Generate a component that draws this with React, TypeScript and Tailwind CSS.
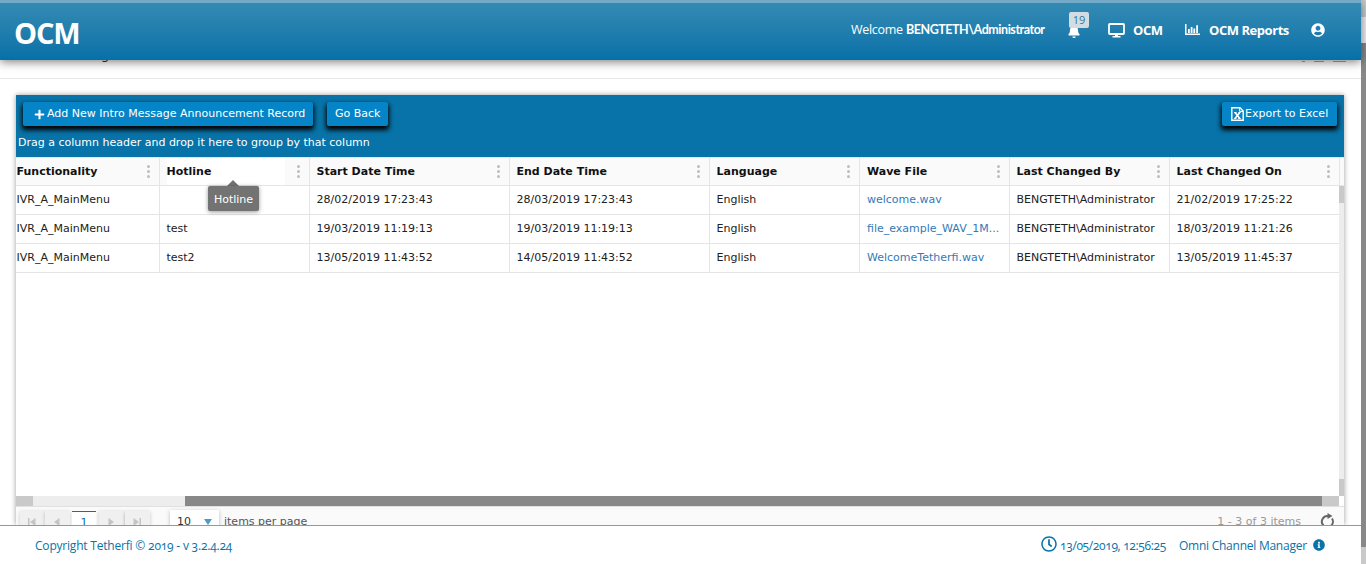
import { FaBell, FaUserCircle, FaInfoCircle, FaPlus, FaRegClock } from "react-icons/fa";

const columns = [
  { title: "Functionality", width: "w-[144px]", pad: "pl-[0.5px]" },
  { title: "Hotline", width: "w-[150px]", pad: "pl-[6.5px]" },
  { title: "Start Date Time", width: "w-[200px]", pad: "pl-[6.5px]" },
  { title: "End Date Time", width: "w-[200px]", pad: "pl-[6.5px]" },
  { title: "Language", width: "w-[150px]", pad: "pl-[6.5px]" },
  { title: "Wave File", width: "w-[150px]", pad: "pl-[7px]" },
  { title: "Last Changed By", width: "w-[160px]", pad: "pl-[6.5px]" },
  { title: "Last Changed On", width: "w-[170px]", pad: "pl-[6.5px]" },
];

const rows = [
  ["IVR_A_MainMenu", "", "28/02/2019 17:23:43", "28/03/2019 17:23:43", "English", "welcome.wav", "BENGTETH\\Administrator", "21/02/2019 17:25:22"],
  ["IVR_A_MainMenu", "test", "19/03/2019 11:19:13", "19/03/2019 11:19:13", "English", "file_example_WAV_1M...", "BENGTETH\\Administrator", "18/03/2019 11:21:26"],
  ["IVR_A_MainMenu", "test2", "13/05/2019 11:43:52", "14/05/2019 11:43:52", "English", "WelcomeTetherfi.wav", "BENGTETH\\Administrator", "13/05/2019 11:45:37"],
];

function Dots() {
  return (
    <span className="flex w-[21px] flex-col items-center gap-[2px] pb-px">
      <i className="h-[3px] w-[3px] rounded-full bg-[#bdbdbd]" />
      <i className="h-[3px] w-[3px] rounded-full bg-[#bdbdbd]" />
      <i className="h-[3px] w-[3px] rounded-full bg-[#bdbdbd]" />
    </span>
  );
}

function MonitorIcon() {
  return (
    <svg width="17" height="15" viewBox="0 0 17 15" fill="none">
      <rect x="1" y="1" width="15" height="10" rx="0.8" stroke="#fff" strokeWidth="1.8" />
      <path d="M7 11h3v2h2.5v1.5h-8V13H7z" fill="#fff" />
    </svg>
  );
}

function BarsIcon() {
  return (
    <svg width="15" height="12" viewBox="0 0 15 12" fill="#fff">
      <path d="M0 0h1.5v9.5H15V11H0zM3 5h1.8v4H3zM5.7 3h1.8v6H5.7zM8.4 4.5h1.8v4.5H8.4zM11.2 1.2h1.8V9h-1.8z" />
    </svg>
  );
}

function ExcelIcon() {
  return (
    <svg width="13" height="14" viewBox="0 0 13 14" fill="none" stroke="#fff">
      <path d="M0.8 0.8h8.2l3.2 3.2v9.2H0.8z" strokeWidth="1.4" />
      <path d="M8.6 1v3.4H12" strokeWidth="1" />
      <path d="M4 5.5l4.8 6M8.8 5.5L4 11.5" strokeWidth="1.6" />
      <path d="M3 5.5h2.6M7.4 5.5h2.4M3 11.5h2.4M7.2 11.5h2.6" strokeWidth="0.9" />
    </svg>
  );
}

function RefreshIcon() {
  return (
    <svg width="15" height="16" viewBox="0 0 15 16" fill="none">
      <path d="M9 3.2A5.6 5.6 0 0 0 3.5 12.5M12 5.5A5.6 5.6 0 0 1 11 12.8" stroke="#666" strokeWidth="2" />
      <path d="M7.5 0v6l5-3z" fill="#666" />
    </svg>
  );
}

const button =
  "flex h-6 items-center rounded-[2px] bg-[#0585c8] text-[11px] text-white shadow-[0_3px_5px_1px_#000]";
const pagerButton =
  "flex h-6 w-[25px] items-center justify-center bg-[#f0f0f0] pr-[2px] shadow-[0_1px_4px_rgba(0,0,0,0.2)]";

export default function App() {
  return (
    <div className="relative flex h-[564px] w-[1366px] overflow-hidden bg-white font-['DejaVu_Sans',sans-serif] text-[11px] text-[#212121]">
      <div className="flex w-[1361px] flex-col">
        <header className="z-10 flex h-[60px] shrink-0 items-center border-t-[3px] border-[#73aac8] bg-linear-to-b from-[#338bb3] to-[#0470a8] pb-[3px] pl-[14px] font-['Open_Sans',sans-serif] text-white shadow-[0_2px_9px_rgba(0,0,0,0.5)]">
          <div className="w-[837px] pt-[5px] text-[29px] leading-none font-bold tracking-[-1.1px]">OCM</div>
          <div className="flex w-[216px] items-center pt-px text-[13px] whitespace-nowrap">
            <span className="w-[55px] text-[12.5px] tracking-[-0.3px]">Welcome</span>
            <b className="font-['Lato',sans-serif] text-[12.5px] font-bold tracking-[-0.46px]">BENGTETH\Administrator</b>
          </div>
          <div className="relative w-[41px] pt-[3px]">
            <FaBell className="h-[13px] w-[14px]" />
            <span className="absolute -top-[10px] left-[2px] flex h-4 w-5 items-center justify-center rounded-[2px] bg-[#d2dce1] text-[11px] text-[#2b7ba5]">19</span>
          </div>
          <MonitorIcon />
          <b className="ml-2 w-[52px] pt-px text-[13px] tracking-[-0.4px]">OCM</b>
          <BarsIcon />
          <b className="ml-[9px] w-[102px] pt-px text-[13px] tracking-[-0.45px]">OCM Reports</b>
          <FaUserCircle className="h-[14px] w-[14px]" />
        </header>
        <div className="flex h-[19px] shrink-0 justify-between overflow-hidden border-b border-[#e7e7e7] pr-[15px] pl-[101px]">
          <span className="-mt-[15px] h-5 text-[13px] leading-5 text-[#333]">g</span>
          <div className="flex h-[2px] gap-[9px] pt-px">
            <i className="h-px w-[3px] bg-[#aaa]" />
            <i className="h-px w-[10px] bg-[#aaa]" />
            <i className="h-px w-[13px] bg-[#aaa]" />
          </div>
        </div>
        <main className="mt-4 ml-4 flex h-[430px] w-[1328px] shrink-0 flex-col overflow-visible shadow-[0_0_5px_rgba(0,0,0,0.4)]">
          <div className="h-[62px] shrink-0 bg-[#0873a8] pt-[7px] text-white">
            <div className="flex px-[7px]">
              <div className={`${button} w-[290px] pl-[11px]`}><FaPlus className="mr-[2px] h-[11px] w-[11px]" />Add New Intro Message Announcement Record</div>
              <div className={`${button} ml-[14px] w-[61px] pl-2`}>Go Back</div>
              <div className={`${button} ml-auto w-[115px] gap-px pl-[9px] whitespace-nowrap`}><ExcelIcon />Export to Excel</div>
            </div>
            <div className="mt-[10px] pl-[2px] leading-[14px]">Drag a column header and drop it here to group by that column</div>
          </div>
          <div className="flex h-[29px] shrink-0 border-y border-[#e5e5e5] bg-[#fafafa] font-bold text-[#111]">
            {columns.map((c) => (
              <div key={c.title} className={`relative flex items-center justify-between border-r border-[#e5e5e5] ${c.width} ${c.pad}`}>
                <span className={`flex h-full items-center pt-px ${c.title === "Hotline" ? "w-[118px] bg-white" : ""}`}>{c.title}</span>
                <Dots />
                {c.title === "Hotline" && (
                  <div className="absolute top-[22px] left-[48px] z-10 flex w-[51px] flex-col items-center font-normal">
                    <i className="mr-px h-0 w-0 border-x-[6px] border-b-[6px] border-x-transparent border-b-[#737373]" />
                    <span className="flex h-[25px] w-full items-center justify-center rounded-[2px] bg-[#737373] pt-[3px] text-white shadow-[0_1px_4px_rgba(0,0,0,0.4)]">Hotline</span>
                  </div>
                )}
              </div>
            ))}
          </div>
          <div className="flex h-[310px] shrink-0 bg-white">
            <div className="w-[1323px] overflow-hidden">
              {rows.map((r) => (
                <div key={r[7]} className="flex h-[29px] border-b border-[#e5e5e5]">
                  {r.map((v, j) => (
                    <div key={columns[j].title} className={`flex shrink-0 items-center border-r border-[#e5e5e5] last:border-r-0 ${columns[j].width} ${columns[j].pad} ${j === 5 ? "text-[#337ab7]" : ""}`}>{v}</div>
                  ))}
                </div>
              ))}
            </div>
            <div className="flex w-[5px] flex-col justify-between bg-[#ededed]">
              <i className="h-[17px] bg-[#c9c9c9]" />
              <i className="h-[17px] bg-[#c9c9c9]" />
            </div>
          </div>
          <div className="flex h-[10px] shrink-0 bg-white">
            <i className="w-[17px] bg-[#c9c9c9]" />
            <i className="w-[152px] bg-[#ededed]" />
            <i className="w-[1137px] bg-[#888]" />
            <i className="w-[17px] bg-[#c9c9c9]" />
          </div>
          <div className="flex h-[19px] shrink-0 items-start overflow-hidden border-t border-[#e0e0e0] bg-[#fafafa] pt-1 pl-1 text-[#555]">
            <div className={pagerButton}>
              <svg width="8" height="8" viewBox="0 0 8 8" fill="#c4c4c4" className="-mt-[3px]"><path d="M0 0h1.5v8H0zM7.5 0v8L2 4z" /></svg>
            </div>
            <div className={pagerButton}>
              <svg width="6" height="8" viewBox="0 0 6 8" fill="#c4c4c4" className="-mt-[3px]"><path d="M5.5 0v8L0 4z" /></svg>
            </div>
            <div className="ml-[2px] flex h-6 w-6 items-center justify-center border-t border-[#0873a8] bg-white pb-px text-[#0873a8]">1</div>
            <div className={`${pagerButton} ml-[3px]`}>
              <svg width="6" height="8" viewBox="0 0 6 8" fill="#c4c4c4" className="-mt-[3px]"><path d="M0.5 0v8L6 4z" /></svg>
            </div>
            <div className={`${pagerButton} ml-px`}>
              <svg width="8" height="8" viewBox="0 0 8 8" fill="#c4c4c4" className="-mt-[3px]"><path d="M6.5 0H8v8H6.5zM0.5 0v8L6 4z" /></svg>
            </div>
            <div className="-mt-px ml-5 flex h-6 w-[49px] items-center justify-between bg-white pr-[7px] pl-[7px] text-[#333] shadow-[0_1px_4px_rgba(0,0,0,0.25)]">
              <span>10</span>
              <i className="h-0 w-0 border-x-[4px] border-t-[6px] border-x-transparent border-t-[#4a9cc4]" />
            </div>
            <span className="ml-[5px] leading-[22px]">items per page</span>
            <span className="ml-auto leading-[21px] text-[#999]">1 - 3 of 3 items</span>
            <span className="mt-[2px] mr-[9px] ml-[19px]"><RefreshIcon /></span>
          </div>
        </main>
        <footer className="z-10 flex h-[39px] shrink-0 items-center border-t border-[#6aa5c4] bg-white pt-px pl-[35px] font-['Open_Sans',sans-serif] text-[12px] whitespace-nowrap text-[#0873a8] oldstyle-nums">
          <span className="w-[1006px] tracking-[-0.2px]">Copyright Tetherfi © 2019 - v 3.2.4.24</span>
          <FaRegClock className="-mt-[3px] h-4 w-4" />
          <span className="ml-[3px] w-[119px] tracking-[-0.35px]">13/05/2019, 12:56:25</span>
          <span className="w-[134px] tracking-[-0.25px]">Omni Channel Manager</span>
          <FaInfoCircle className="-mt-[2px] h-3 w-3" />
        </footer>
      </div>
      <div className="flex w-[5px] flex-col">
        <i className="h-[17px] bg-[#c9c9c9]" />
        <i className="h-[26px] bg-[#ededed]" />
        <i className="h-[504px] bg-[#888]" />
        <i className="h-[17px] bg-[#c9c9c9]" />
      </div>
    </div>
  );
}
